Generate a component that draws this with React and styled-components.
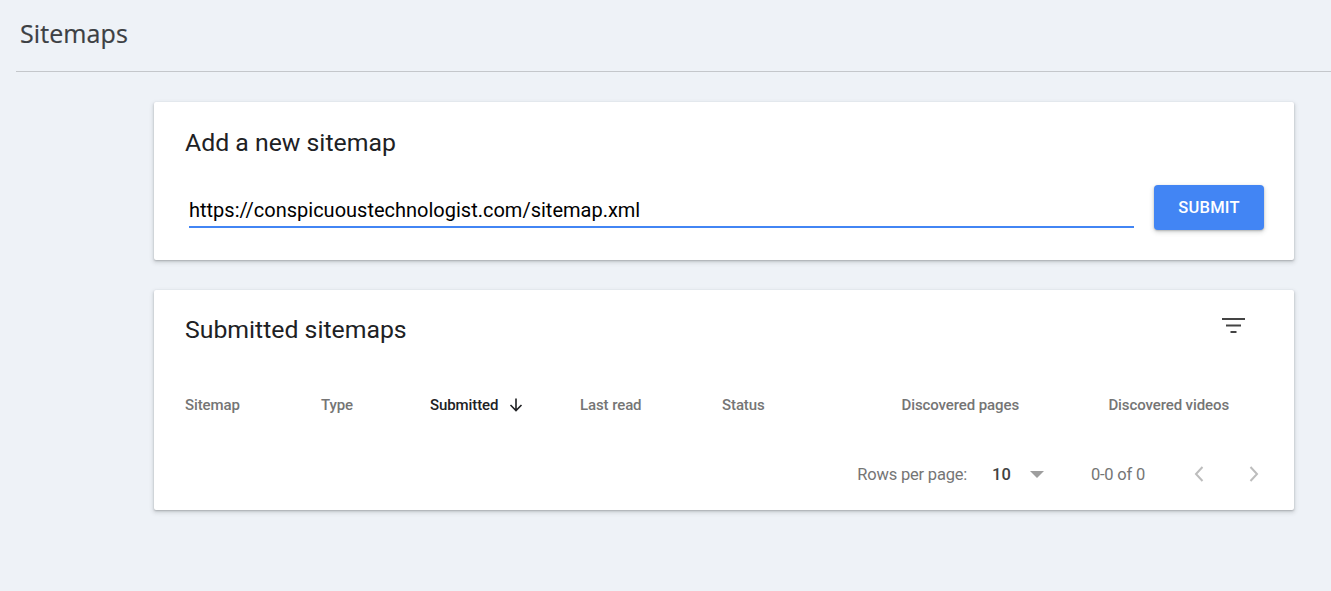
import React from "react";
import styled, { createGlobalStyle } from "styled-components";

const Global = createGlobalStyle`
  html, body { margin: 0; padding: 0; background: #eef2f7; }
  body { font-family: Roboto, "Liberation Sans", Arial, sans-serif; color: #202124; }
  * { box-sizing: border-box; }
`;

const Page = styled.div`
  min-height: 591px;
  background: #eef2f7;
`;

const Header = styled.header`
  margin-left: 16px;
  height: 72px;
  border-bottom: 1px solid #c4c7cb;
  display: flex;
  align-items: flex-start;
  padding: 17px 0 0 4px;
`;

const PageTitle = styled.h1`
  margin: 0;
  font-family: "Open Sans", Roboto, sans-serif;
  font-weight: 400;
  font-size: 25px;
  line-height: 32px;
  color: #3c4043;
  letter-spacing: 0.1px;
  -webkit-text-stroke: 0.2px #3c4043;
`;

const Main = styled.main`
  padding: 30px 37px 0 154px;
  display: flex;
  flex-direction: column;
  gap: 30px;
`;

const Card = styled.section`
  background: #fff;
  border-radius: 2px;
  box-shadow: 0 1px 2px rgba(60, 64, 67, 0.3), 0 2px 4px 1px rgba(60, 64, 67, 0.15);
  height: ${(p) => p.$h}px;
  padding: ${(p) => p.$pad};
  display: flex;
  flex-direction: column;
`;

const CardTitle = styled.h2`
  margin: 0;
  margin-top: ${(p) => p.$mt || 0}px;
  font-size: 24.8px;
  font-weight: 400;
  line-height: 30px;
  color: #202124;
`;

const InputRow = styled.div`
  display: flex;
  align-items: center;
  margin-top: 25px;
  gap: 20px;
`;

const Field = styled.div`
  flex: 1;
  margin-left: 4px;
  border-bottom: 2px solid #4285f4;
  height: 42px;
  display: flex;
  align-items: flex-end;
  padding-bottom: 4px;
`;

const FieldText = styled.span`
  font-size: 20px;
  color: #000;
  line-height: 24px;
`;

const SubmitButton = styled.button`
  width: 110px;
  height: 45px;
  border: none;
  border-radius: 4px;
  background: #4285f4;
  color: #fff;
  font-family: Roboto, sans-serif;
  font-weight: 500;
  font-size: 16.5px;
  letter-spacing: 0.2px;
  text-transform: uppercase;
  box-shadow: 0 1px 2px rgba(60, 64, 67, 0.3), 0 2px 4px 1px rgba(60, 64, 67, 0.15);
  margin-top: 2px;
`;

const TitleRow = styled.div`
  display: flex;
  justify-content: space-between;
  align-items: flex-start;
`;

const IconButton = styled.span`
  display: inline-flex;
  margin-top: 28px;
  margin-right: 48px;
`;

const TableHead = styled.div`
  display: grid;
  grid-template-columns: 136px 109px 150px 142px 87px 210px 210px;
  margin-top: 50px;
  align-items: center;
  height: 20px;
`;

const Th = styled.div`
  font-size: 15px;
  font-weight: 500;
  color: ${(p) => (p.$active ? "#202124" : "#757575")};
  text-align: ${(p) => (p.$right ? "right" : "left")};
  display: flex;
  align-items: center;
  justify-content: ${(p) => (p.$right ? "flex-end" : "flex-start")};
  gap: 10px;
  letter-spacing: -0.1px;
`;

const Footer = styled.div`
  display: flex;
  justify-content: flex-end;
  align-items: center;
  margin-top: 49px;
  padding-right: 3px;
  height: 20px;
`;

const FootLabel = styled.span`
  font-size: 16.5px;
  color: #757575;
  letter-spacing: -0.2px;
`;

const RowsValue = styled.span`
  font-size: 16.5px;
  color: #424242;
  font-weight: 500;
  margin-left: 25px;
`;

const Caret = styled.span`
  width: 0;
  height: 0;
  border-left: 7px solid transparent;
  border-right: 7px solid transparent;
  border-top: 7px solid #9e9e9e;
  margin-left: 19px;
  margin-right: 47px;
`;

const Chevron = styled.span`
  display: inline-flex;
  margin-left: ${(p) => p.$ml}px;
  margin-right: ${(p) => p.$mr || 0}px;
`;

const FilterIcon = () => (
  <svg width="24" height="16" viewBox="0 0 24 16">
    <rect x="0" y="0" width="23" height="2" fill="#444" />
    <rect x="4" y="6.5" width="15" height="2" fill="#444" />
    <rect x="8.5" y="13" width="6" height="2" fill="#444" />
  </svg>
);

const ArrowDown = () => (
  <svg width="16" height="16" viewBox="0 0 16 16">
    <path d="M8 1.5v12M2.5 8l5.5 5.5L13.5 8" fill="none" stroke="#202124" strokeWidth="1.6" />
  </svg>
);

const ChevronSvg = ({ left }) => (
  <svg width="12" height="18" viewBox="0 0 12 18">
    <path
      d={left ? "M9.5 2L3 9l6.5 7" : "M2.5 2L9 9l-6.5 7"}
      fill="none"
      stroke="#bdbdbd"
      strokeWidth="2"
    />
  </svg>
);

export default function App() {
  return (
    <Page>
      <Global />
      <Header>
        <PageTitle>Sitemaps</PageTitle>
      </Header>
      <Main>
        <Card $h={158} $pad="26px 30px 0 31px">
          <CardTitle>Add a new sitemap</CardTitle>
          <InputRow>
            <Field>
              <FieldText>https://conspicuoustechnologist.com/sitemap.xml</FieldText>
            </Field>
            <SubmitButton>Submit</SubmitButton>
          </InputRow>
        </Card>
        <Card $h={220} $pad="0 0 0 31px">
          <TitleRow>
            <CardTitle $mt={25}>Submitted sitemaps</CardTitle>
            <IconButton>
              <FilterIcon />
            </IconButton>
          </TitleRow>
          <TableHead>
            <Th>Sitemap</Th>
            <Th>Type</Th>
            <Th $active>
              Submitted <ArrowDown />
            </Th>
            <Th>Last read</Th>
            <Th>Status</Th>
            <Th $right>Discovered pages</Th>
            <Th $right>Discovered videos</Th>
          </TableHead>
          <Footer>
            <FootLabel>Rows per page:</FootLabel>
            <RowsValue>10</RowsValue>
            <Caret />
            <FootLabel>0-0 of 0</FootLabel>
            <Chevron $ml={48}>
              <ChevronSvg left />
            </Chevron>
            <Chevron $ml={43} $mr={31}>
              <ChevronSvg />
            </Chevron>
          </Footer>
        </Card>
      </Main>
    </Page>
  );
}
